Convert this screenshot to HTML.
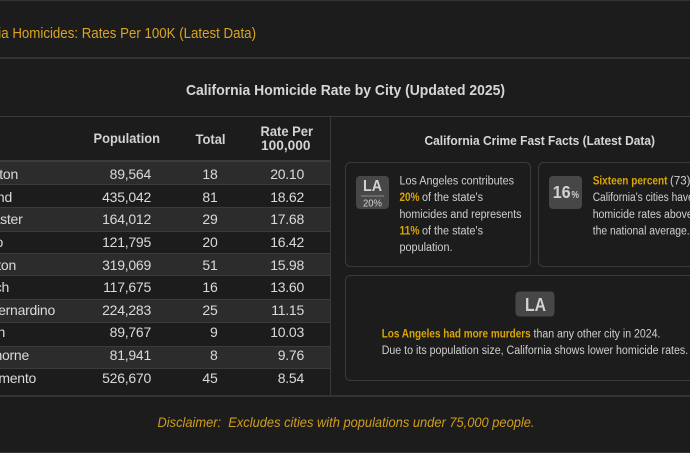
<!DOCTYPE html>
<html>
<head>
<meta charset="utf-8">
<style>
html,body{margin:0;padding:0;background:#1c1c1c;width:690px;height:453px;overflow:hidden}
svg{display:block;font-family:"Liberation Sans",sans-serif}
.n{font-size:14px;letter-spacing:-.25px;fill:#dadada;text-anchor:end}
.h{font-size:14px;fill:#d2d2d2;font-weight:700}
.t{font-size:11.5px;fill:#d0d0d0}
.g{fill:#d9a406;font-weight:700}
</style>
</head>
<body>
<svg width="690" height="453" viewBox="0 0 690 453" xmlns="http://www.w3.org/2000/svg">
<rect width="690" height="453" fill="#1c1c1c"/>
<rect y="0" width="690" height="1" fill="#333"/>
<rect y="57" width="690" height="2" fill="#333"/>
<rect y="452" width="690" height="1" fill="#333"/>
<text x="-47.5" y="38" font-size="14.5" fill="#d9a520" textLength="303.5" lengthAdjust="spacingAndGlyphs">California Homicides: Rates Per 100K (Latest Data)</text>
<text x="186" y="95" font-size="15" font-weight="700" fill="#d6d6d6" textLength="319" lengthAdjust="spacingAndGlyphs">California Homicide Rate by City (Updated 2025)</text>

<!-- table -->
<rect y="116" width="690" height="1" fill="#3a3a3a"/>
<rect y="395" width="690" height="2" fill="#333"/>
<rect x="330" y="117" width="1" height="278" fill="#3a3a3a"/>
<g fill="#2c2c2c">
<rect y="162" width="330" height="22"/>
<rect y="208" width="330" height="23"/>
<rect y="254" width="330" height="21"/>
<rect y="299" width="330" height="23"/>
<rect y="346" width="330" height="22"/>
</g>
<g fill="#3b3b3b">
<rect y="160" width="330" height="2"/>
<rect y="184" width="330" height="1"/>
<rect y="207" width="330" height="1"/>
<rect y="231" width="330" height="1"/>
<rect y="253" width="330" height="1"/>
<rect y="275" width="330" height="1"/>
<rect y="299" width="330" height="1"/>
<rect y="322" width="330" height="1"/>
<rect y="346" width="330" height="1"/>
<rect y="368" width="330" height="1"/>
</g>
<text class="h" x="93.5" y="143" textLength="66.5" lengthAdjust="spacingAndGlyphs">Population</text>
<text class="h" x="195.5" y="144" textLength="30" lengthAdjust="spacingAndGlyphs">Total</text>
<text class="h" x="260.5" y="136" textLength="52.5" lengthAdjust="spacingAndGlyphs">Rate Per</text>
<text class="h" x="261" y="150" textLength="49.5" lengthAdjust="spacingAndGlyphs">100,000</text>

<g>
<text class="n" x="18" y="179">Compton</text>
<text class="n" x="12" y="202">Oakland</text>
<text class="n" x="22.5" y="224">Lancaster</text>
<text class="n" x="3" y="247">Vallejo</text>
<text class="n" x="16" y="270">Stockton</text>
<text class="n" x="9" y="292">Antioch</text>
<text class="n" x="55" y="315">San Bernardino</text>
<text class="n" x="5" y="337">Carson</text>
<text class="n" x="29" y="360">Hawthorne</text>
<text class="n" x="36" y="383">Sacramento</text>
</g>
<g>
<text class="n" x="151" y="179">89,564</text><text class="n" x="217.5" y="179">18</text><text class="n" x="304" y="179">20.10</text>
<text class="n" x="151" y="202">435,042</text><text class="n" x="217.5" y="202">81</text><text class="n" x="304" y="202">18.62</text>
<text class="n" x="151" y="224">164,012</text><text class="n" x="217.5" y="224">29</text><text class="n" x="304" y="224">17.68</text>
<text class="n" x="151" y="247">121,795</text><text class="n" x="217.5" y="247">20</text><text class="n" x="304" y="247">16.42</text>
<text class="n" x="151" y="270">319,069</text><text class="n" x="217.5" y="270">51</text><text class="n" x="304" y="270">15.98</text>
<text class="n" x="151" y="292">117,675</text><text class="n" x="217.5" y="292">16</text><text class="n" x="304" y="292">13.60</text>
<text class="n" x="151" y="315">224,283</text><text class="n" x="217.5" y="315">25</text><text class="n" x="304" y="315">11.15</text>
<text class="n" x="151" y="337">89,767</text><text class="n" x="217.5" y="337">9</text><text class="n" x="304" y="337">10.03</text>
<text class="n" x="151" y="360">81,941</text><text class="n" x="217.5" y="360">8</text><text class="n" x="304" y="360">9.76</text>
<text class="n" x="151" y="383">526,670</text><text class="n" x="217.5" y="383">45</text><text class="n" x="304" y="383">8.54</text>
</g>

<!-- facts -->
<text x="424.5" y="145" font-size="13" font-weight="700" fill="#d6d6d6" textLength="230.5" lengthAdjust="spacingAndGlyphs">California Crime Fast Facts (Latest Data)</text>

<rect x="345.5" y="162.5" width="185" height="104" rx="5" fill="none" stroke="#3a3a3a"/>
<rect x="538.5" y="162.5" width="185" height="104" rx="5" fill="none" stroke="#3a3a3a"/>
<rect x="345.5" y="275.5" width="378" height="105" rx="5" fill="none" stroke="#3a3a3a"/>

<rect x="356" y="176" width="33" height="33" rx="4" fill="#474747"/>
<text x="363" y="191" font-size="16" font-weight="700" fill="#d2d2d2" textLength="19" lengthAdjust="spacingAndGlyphs">LA</text>
<rect x="361" y="195.5" width="23" height="1" fill="#8a8a8a"/>
<text x="363" y="206.5" font-size="10.5" fill="#d0d0d0" textLength="19" lengthAdjust="spacingAndGlyphs">20%</text>

<rect x="549" y="176" width="33" height="33" rx="4" fill="#474747"/>
<text x="552.7" y="198" font-size="17.5" font-weight="700" fill="#d2d2d2" textLength="18" lengthAdjust="spacingAndGlyphs">16</text>
<text x="571.5" y="198" font-size="10" font-weight="700" fill="#d0d0d0" textLength="7.5" lengthAdjust="spacingAndGlyphs">%</text>

<rect x="515.5" y="291.5" width="39" height="25" rx="4" fill="#474747"/>
<text x="525" y="311" font-size="18.5" font-weight="700" fill="#d2d2d2" textLength="21" lengthAdjust="spacingAndGlyphs">LA</text>

<text class="t" x="399.5" y="184.5" textLength="114.5" lengthAdjust="spacingAndGlyphs">Los Angeles contributes</text>
<text class="t g" x="399.5" y="201" textLength="20" lengthAdjust="spacingAndGlyphs">20%</text>
<text class="t" x="422" y="201" textLength="61" lengthAdjust="spacingAndGlyphs">of the state's</text>
<text class="t" x="399.5" y="218" textLength="122" lengthAdjust="spacingAndGlyphs">homicides and represents</text>
<text class="t g" x="399.5" y="234.5" textLength="20" lengthAdjust="spacingAndGlyphs">11%</text>
<text class="t" x="422" y="234.5" textLength="61" lengthAdjust="spacingAndGlyphs">of the state's</text>
<text class="t" x="399.5" y="251" textLength="53" lengthAdjust="spacingAndGlyphs">population.</text>

<text class="t g" x="592.7" y="184.5" textLength="74.8" lengthAdjust="spacingAndGlyphs">Sixteen percent</text>
<text class="t" x="670" y="184.5">(73) of</text>
<text class="t" x="592.7" y="201" textLength="101" lengthAdjust="spacingAndGlyphs">California's cities have</text>
<text class="t" x="592.7" y="218" textLength="100" lengthAdjust="spacingAndGlyphs">homicide rates above</text>
<text class="t" x="592.7" y="234.5" textLength="97" lengthAdjust="spacingAndGlyphs">the national average.</text>

<text class="t g" x="381.7" y="337.5" textLength="149" lengthAdjust="spacingAndGlyphs">Los Angeles had more murders</text>
<text class="t" x="533.5" y="337.5" textLength="127" lengthAdjust="spacingAndGlyphs">than any other city in 2024.</text>
<text class="t" x="381.7" y="354" textLength="306.5" lengthAdjust="spacingAndGlyphs">Due to its population size, California shows lower homicide rates.</text>

<text x="157.5" y="427" font-size="14" font-style="italic" fill="#cf9d1f" textLength="377" lengthAdjust="spacingAndGlyphs">Disclaimer:&#160; Excludes cities with populations under 75,000 people.</text>
</svg>
</body>
</html>
